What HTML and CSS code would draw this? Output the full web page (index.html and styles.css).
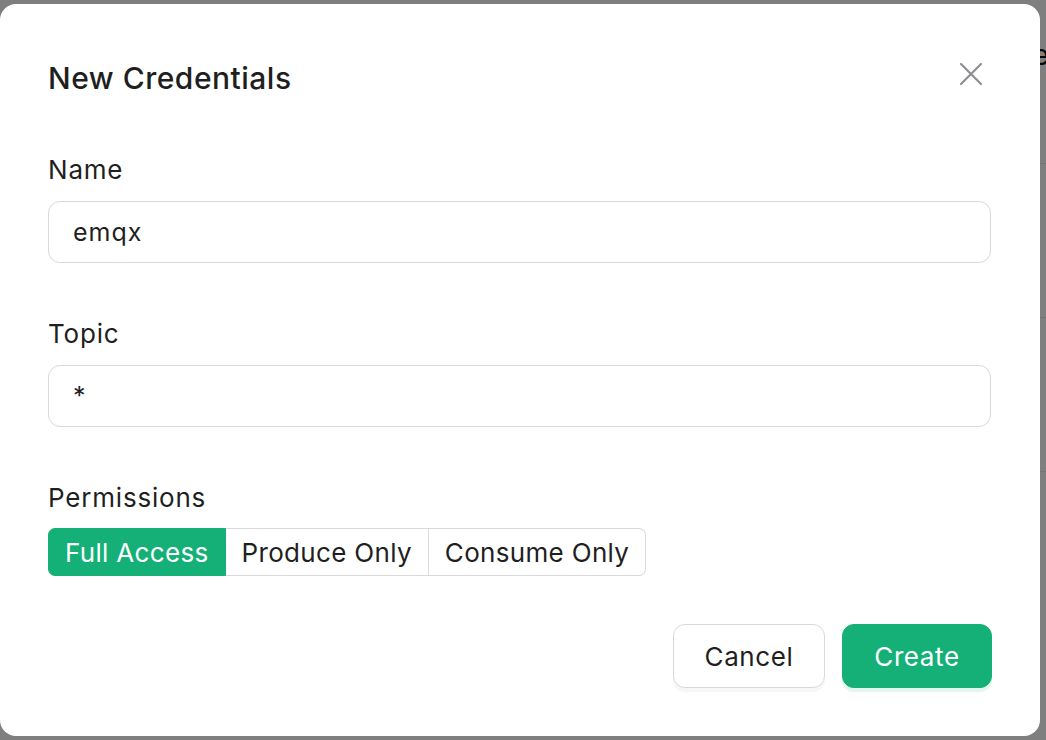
FILE: index.html
```html
<!DOCTYPE html>
<html lang="en">
<head>
<meta charset="utf-8">
<title>New Credentials</title>
<link rel="stylesheet" href="styles.css">
</head>
<body>
  <div class="page">
    <div class="page-head"><span class="page-head-text">Type</span></div>
    <div class="page-row"></div>
    <div class="page-row"></div>
  </div>
  <div class="mask"></div>
  <div class="modal" role="dialog">
    <div class="modal-header">
      <h2 class="modal-title">New Credentials</h2>
      <button class="close" aria-label="Close">
        <svg width="24" height="24" viewBox="0 0 24 24"><path d="M2 2 L22 22 M22 2 L2 22" stroke="#8e8e93" stroke-width="2.2" stroke-linecap="round" fill="none"/></svg>
      </button>
    </div>
    <div class="form-item">
      <label class="label">Name</label>
      <div class="input">emqx</div>
    </div>
    <div class="form-item">
      <label class="label">Topic</label>
      <div class="input">*</div>
    </div>
    <div class="form-item perm">
      <label class="label">Permissions</label>
      <div class="segmented">
        <span class="seg active">Full Access</span>
        <span class="seg">Produce Only</span>
        <span class="seg">Consume Only</span>
      </div>
    </div>
    <div class="footer">
      <button class="btn btn-default">Cancel</button>
      <button class="btn btn-primary">Create</button>
    </div>
  </div>
</body>
</html>
```

FILE: styles.css
```css
* { box-sizing: border-box; }
html, body { margin: 0; padding: 0; }
body {
  width: 1046px;
  height: 740px;
  overflow: hidden;
  position: relative;
  font-family: Inter, "Noto Sans", sans-serif;
  color: #1f1f1f;
  background: #ffffff;
}
.page {
  width: 1046px;
  height: 740px;
}
.page-head {
  height: 164px;
  border-bottom: 1px solid #e8e8e8;
  display: flex;
  justify-content: flex-end;
  padding-top: 38px;
  margin-right: -3px;
}
.page-head-text {
  font-size: 28px;
  color: #111;
}
.page-row {
  height: 154px;
  border-bottom: 1px solid #e8e8e8;
}
.mask {
  position: absolute;
  inset: 0;
  background: rgba(0, 0, 0, 0.5);
}
.modal {
  position: absolute;
  left: 0;
  top: 4px;
  width: 1040px;
  height: 732px;
  background: #ffffff;
  border-radius: 16px;
  padding: 56px 48px 48px 48px;
  display: flex;
  flex-direction: column;
}
.modal-header {
  display: flex;
  justify-content: space-between;
  align-items: flex-start;
}
.modal-title {
  margin: 0;
  font-size: 30px;
  line-height: 36px;
  font-weight: 500;
  letter-spacing: 0.5px;
  color: #1f1f1f;
}
.close {
  border: 0;
  background: none;
  padding: 0;
  margin: 2px 9px 0 0;
  width: 24px;
  height: 24px;
  display: flex;
}
.form-item {
  margin-top: 58px;
  display: flex;
  flex-direction: column;
}
.form-item + .form-item { margin-top: 55px; }
.label {
  font-size: 26px;
  line-height: 32px;
  letter-spacing: 0.8px;
  color: #1f1f1f;
  margin-bottom: 15px;
}
.perm .label { margin-bottom: 14px; }
.input {
  height: 62px;
  width: 943px;
  border: 1.5px solid #d9d9d9;
  border-radius: 12px;
  padding: 0 24px;
  display: flex;
  align-items: center;
  font-size: 25px;
  letter-spacing: 1px;
  color: #1f1f1f;
}
.segmented {
  display: flex;
  align-self: flex-start;
  height: 48px;
}
.seg {
  display: flex;
  align-items: center;
  padding: 0 16px;
  font-size: 26px;
  letter-spacing: 0.32px;
  color: #1f1f1f;
  border: 1.5px solid #d9d9d9;
  border-left-width: 0;
  background: #fff;
}
.seg:first-child { border-left-width: 1.5px; border-radius: 7px 0 0 7px; }
.seg:last-child { border-radius: 0 7px 7px 0; }
.seg.active {
  background: #14b077;
  border-color: #14b077;
  color: #ffffff;
}
.footer {
  margin-top: auto;
  display: flex;
  justify-content: flex-end;
  gap: 17px;
}
.btn {
  height: 64px;
  border-radius: 12px;
  font-family: inherit;
  font-size: 26px;
  letter-spacing: 0.6px;
  padding: 0;
  cursor: pointer;
}
.btn-default {
  width: 152px;
  background: #ffffff;
  border: 1.5px solid #d9d9d9;
  color: #1f1f1f;
  box-shadow: 0 4px 0 rgba(0, 0, 0, 0.03);
}
.btn-primary {
  width: 150px;
  background: #14b077;
  border: 1.5px solid #14b077;
  color: #ffffff;
  box-shadow: 0 4px 0 #e3f7ee;
}
```
